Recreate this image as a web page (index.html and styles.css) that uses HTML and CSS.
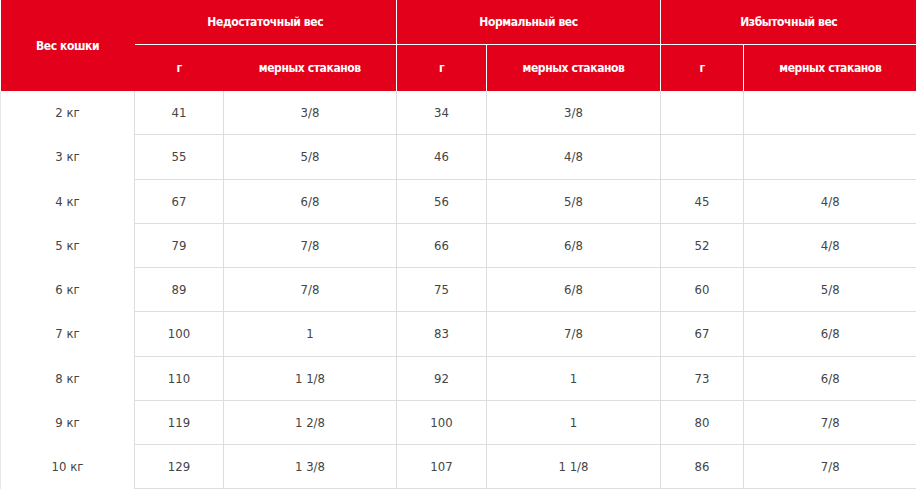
FILE: index.html
```html
<!DOCTYPE html>
<html lang="ru">
<head>
<meta charset="utf-8">
<link rel="stylesheet" href="styles.css">
</head>
<body>
<table class="feed">
  <colgroup>
    <col class="c1"><col class="c2"><col class="c3"><col class="c4"><col class="c5"><col class="c6"><col class="c7">
  </colgroup>
  <thead>
    <tr class="h1">
      <th rowspan="2" class="cat">Вес кошки</th>
      <th colspan="2" class="grp">Недостаточный вес</th>
      <th colspan="2" class="grp sep">Нормальный вес</th>
      <th colspan="2" class="grp sep">Избыточный вес</th>
    </tr>
    <tr class="h2">
      <th>г</th>
      <th>мерных стаканов</th>
      <th class="sep">г</th>
      <th class="sep">мерных стаканов</th>
      <th class="sep">г</th>
      <th class="sep">мерных стаканов</th>
    </tr>
  </thead>
  <tbody>
    <tr><td class="cat">2 кг</td><td>41</td><td>3/8</td><td>34</td><td>3/8</td><td></td><td></td></tr>
    <tr><td class="cat">3 кг</td><td>55</td><td>5/8</td><td>46</td><td>4/8</td><td></td><td></td></tr>
    <tr><td class="cat">4 кг</td><td>67</td><td>6/8</td><td>56</td><td>5/8</td><td>45</td><td>4/8</td></tr>
    <tr><td class="cat">5 кг</td><td>79</td><td>7/8</td><td>66</td><td>6/8</td><td>52</td><td>4/8</td></tr>
    <tr><td class="cat">6 кг</td><td>89</td><td>7/8</td><td>75</td><td>6/8</td><td>60</td><td>5/8</td></tr>
    <tr><td class="cat">7 кг</td><td>100</td><td>1</td><td>83</td><td>7/8</td><td>67</td><td>6/8</td></tr>
    <tr><td class="cat">8 кг</td><td>110</td><td>1 1/8</td><td>92</td><td>1</td><td>73</td><td>6/8</td></tr>
    <tr><td class="cat">9 кг</td><td>119</td><td>1 2/8</td><td>100</td><td>1</td><td>80</td><td>7/8</td></tr>
    <tr><td class="cat">10 кг</td><td>129</td><td>1 3/8</td><td>107</td><td>1 1/8</td><td>86</td><td>7/8</td></tr>
  </tbody>
</table>
</body>
</html>
```
FILE: styles.css
```css
html, body {
  margin: 0;
  padding: 0;
  background: #fff;
}
.feed {
  width: 916px;
  table-layout: fixed;
  border-collapse: collapse;
  font-family: "DejaVu Sans Condensed", "Liberation Sans", sans-serif;
}
.c1 { width: 134px; }
.c2 { width: 89px; }
.c3 { width: 173px; }
.c4 { width: 90px; }
.c5 { width: 174px; }
.c6 { width: 83px; }
.c7 { width: 173px; }

thead th {
  background: #e2001a;
  color: #fff;
  font-weight: bold;
  font-size: 12px;
  text-align: center;
  padding: 0;
  letter-spacing: -0.4px;
}
.h1 th { height: 44px; }
.h1 .grp { border-bottom: 1px solid #fff; }
.h2 th { height: 46px; }
thead th.sep { border-left: 1px solid #fff; }
thead th.cat { vertical-align: middle; }

tbody td {
  height: 43.25px;
  padding: 0;
  text-align: center;
  font-size: 13px;
  color: #444;
  border-left: 1px solid #ddd;
  border-bottom: 1px solid #ddd;
}
tbody td.cat {
  border-bottom: none;
  border-left: 1px solid #e6e6e6;
}
```
